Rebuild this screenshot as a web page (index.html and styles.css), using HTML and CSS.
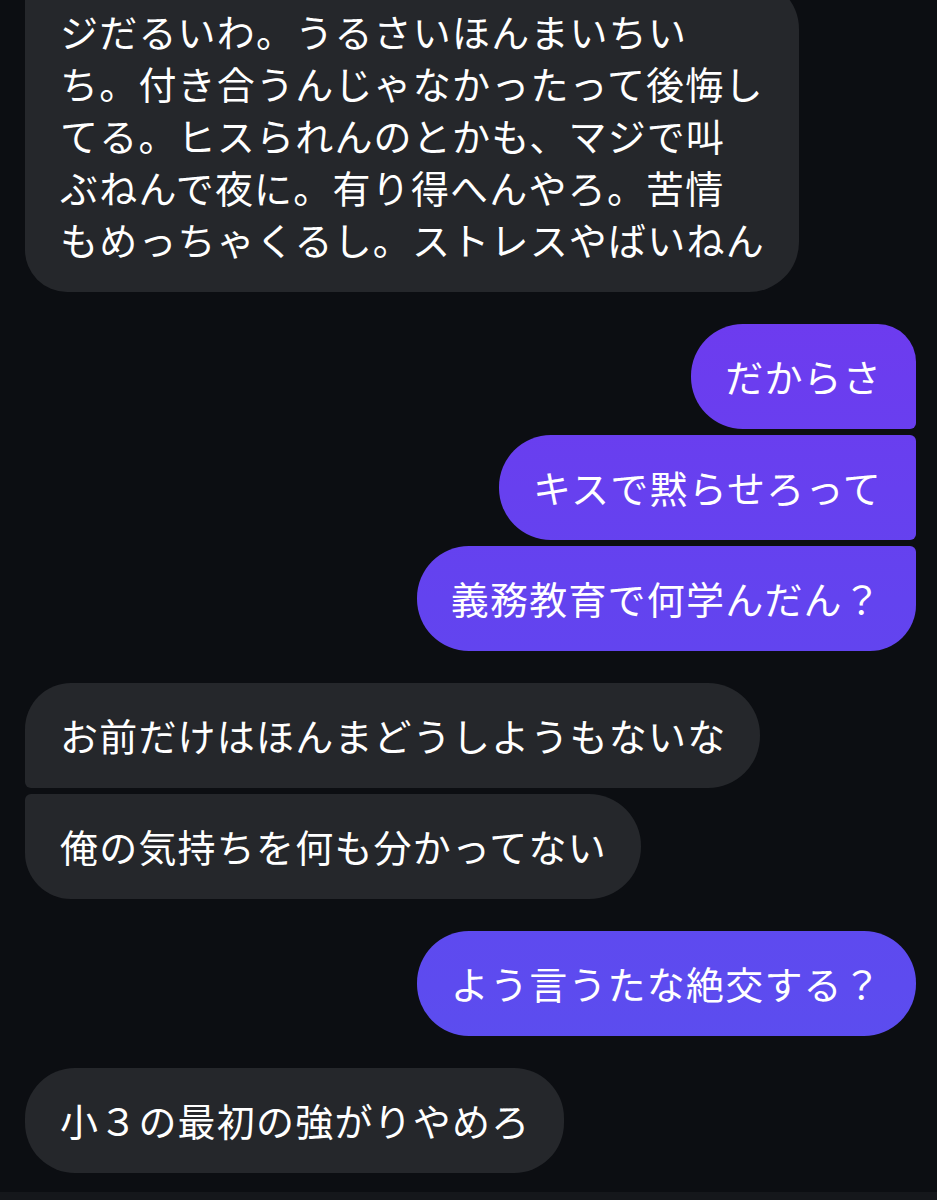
FILE: index.html
```html
<!DOCTYPE html>
<html lang="ja">
<head>
<meta charset="utf-8">
<title>Chat</title>
<link rel="stylesheet" href="styles.css">
</head>
<body>
<div class="screen">
  <div class="thread">
    <div class="group in top-cut">
      <div class="bubble in last">ジだるいわ。うるさいほんまいちい<br>ち。付き合うんじゃなかったって後悔し<br>てる。ヒスられんのとかも、マジで叫<br>ぶねんで夜に。有り得へんやろ。苦情<br>もめっちゃくるし。ストレスやばいねん</div>
    </div>
    <div class="group out">
      <div class="bubble out first">だからさ</div>
      <div class="bubble out mid">キスで黙らせろって</div>
      <div class="bubble out last">義務教育で何学んだん？</div>
    </div>
    <div class="group in">
      <div class="bubble in first">お前だけはほんまどうしようもないな</div>
      <div class="bubble in last">俺の気持ちを何も分かってない</div>
    </div>
    <div class="group out">
      <div class="bubble out single">よう言うたな絶交する？</div>
    </div>
    <div class="group in">
      <div class="bubble in single">小３の最初の強がりやめろ</div>
    </div>
  </div>
  <div class="composer"></div>
</div>
</body>
</html>
```
FILE: styles.css
```css
html, body {
  margin: 0;
  padding: 0;
  background: #0c0e12;
}
body {
  width: 937px;
  height: 1200px;
  overflow: hidden;
  font-family: "Noto Sans CJK JP", "Hiragino Sans", sans-serif;
  color: #ffffff;
}
.screen {
  display: flex;
  flex-direction: column;
}
.thread {
  display: flex;
  flex-direction: column;
  gap: 32px;
  padding: 0 21px 0 25px;
  margin-top: -21px;
}
.group {
  display: flex;
  flex-direction: column;
  gap: 6px;
}
.group.in { align-items: flex-start; }
.group.out { align-items: flex-end; }
.bubble {
  font-size: 38px;
  letter-spacing: 1.2px;
  line-height: 52px;
  padding: 26px 34px 27px 35px;
  white-space: nowrap;
}
.bubble.in {
  background: #25272b;
}
.bubble.out {
  padding: 26px 34px 27px 34px;
  background: linear-gradient(180deg, #7834ee 0px, #6b3def 380px, #6343ef 600px, #5d4bef 985px, #5752ee 1200px);
  background-attachment: fixed;
}
.group.out.late { margin-top: 1px; }
.bubble.in.single { border-radius: 50px; }
.bubble.in.first { border-radius: 46px 52px 52px 6px; }
.bubble.in.last { border-radius: 6px 52px 52px 46px; }
.top-cut .bubble.in.last { border-radius: 6px 50px 50px 42px; }
.bubble.out.single { border-radius: 52px; }
.bubble.out.first { border-radius: 52px 38px 6px 52px; }
.bubble.out.mid { border-radius: 52px 6px 6px 52px; }
.bubble.out.last { border-radius: 52px 6px 46px 52px; }
.composer {
  margin-top: 19px;
  height: 60px;
  background: #15171b;
}
```
